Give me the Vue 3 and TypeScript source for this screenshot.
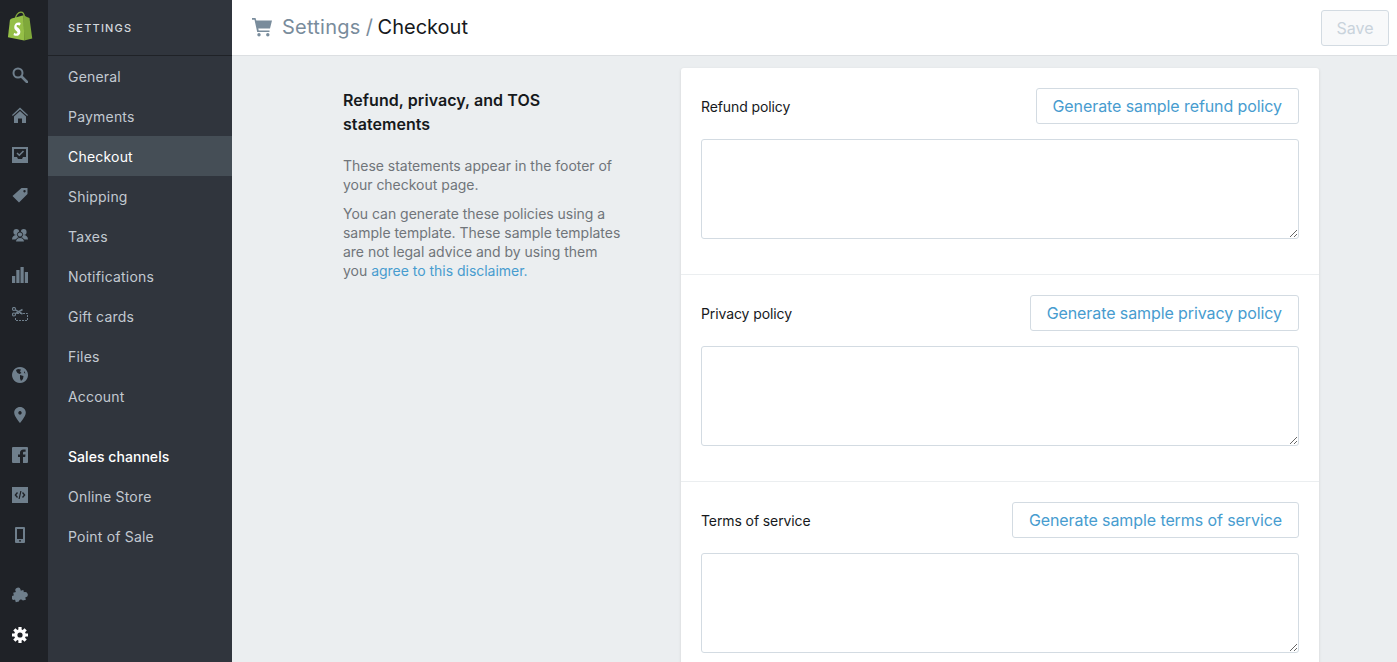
<script setup lang="ts">
const settings: string[] = ['General', 'Payments', 'Checkout', 'Shipping', 'Taxes', 'Notifications', 'Gift cards', 'Files', 'Account']
const channels: string[] = ['Online Store', 'Point of Sale']
const policies = [
  { label: 'Refund policy', action: 'Generate sample refund policy' },
  { label: 'Privacy policy', action: 'Generate sample privacy policy' },
  { label: 'Terms of service', action: 'Generate sample terms of service' },
]
</script>

<template>
  <div class="app">
    <nav class="rail">
      <div class="logo">
        <svg width="26" height="30" viewBox="0 0 28 32">
          <path d="M9 8C9.500 4.500 12 1 15 1 17.500 1 18.500 3.500 18.800 6" fill="none" stroke="#86ab3f" stroke-width="1.300" />
          <path d="M18 4.500 5 8 3.200 9.200 1 28 18.500 31.500Z" fill="#95bf47" />
          <path d="M18 4.500 18.500 31.500 27.200 29.500 24.200 7.500 21.500 6.300Z" fill="#7fa83a" />
          <path d="M14.800 12.800 13.900 15.500C13.200 15.100 12.400 14.900 11.700 14.900 10.600 14.900 10.300 15.500 10.300 16 10.300 17.500 14.400 18.200 14.400 22.100 14.400 25 12.500 26.600 10.200 26.600 8.400 26.600 7 25.700 7 25.700L7.700 23.200C8.300 23.700 9.200 24.200 10.100 24.200 10.800 24.200 11.200 23.700 11.200 23.100 11.200 21.100 7.800 21 7.800 17.100 7.800 14.400 9.800 12.300 12.300 12.300 13.700 12.300 14.800 12.800 14.800 12.800Z" fill="#fff" />
        </svg>
      </div>
      <div class="rail-group">
        <a class="rail-item"><svg viewBox="0 0 16 16"><circle cx="6" cy="6" r="4.500" fill="none" stroke="currentColor" stroke-width="2" /><path d="M9.500 9.500 15 15" stroke="currentColor" stroke-width="2.600" stroke-linecap="round" /></svg></a>
        <a class="rail-item"><svg viewBox="0 0 16 16"><path d="M8 .5 0 8l.8 1L8 2.500 15.200 9l.8-1Z" fill="currentColor" /><path d="M8 4 2 9.400V16h4v-4.500h4V16h4V9.400Z" fill="currentColor" /></svg></a>
        <a class="rail-item"><svg viewBox="0 0 16 16"><path fill-rule="evenodd" d="M0 0h16v16H0ZM2 2v8h3l1 2h4l1-2h3V2Z" fill="currentColor" /><path d="M5 6l2.300 2.300L11.500 4" fill="none" stroke="currentColor" stroke-width="1.500" /></svg></a>
        <a class="rail-item"><svg viewBox="0 0 16 16"><path fill-rule="evenodd" d="M9.500 1H15.500V7L7 15.500.5 9ZM12.500 3a1.200 1.200 0 1 0 .01 0Z" fill="currentColor" /></svg></a>
        <a class="rail-item"><svg viewBox="0 0 16 16"><g fill="currentColor"><circle cx="4.300" cy="5" r="2.900" /><circle cx="11.700" cy="5" r="2.900" /><path d="M0 12.500C0 9.500 2 8 4.300 8S8 9.500 8 12.500ZM8 12.500C8 9.500 9.500 8 11.700 8S16 9.500 16 12.500Z" /></g><g fill="currentColor" stroke="#1f2227" stroke-width="1"><circle cx="8" cy="7.500" r="2.600" /><path d="M3.500 15C3.500 12 5.500 10.500 8 10.500S12.500 12 12.500 15Z" /></g></svg></a>
        <a class="rail-item"><svg viewBox="0 0 16 16"><g fill="currentColor"><rect x="0" y="9" width="3.200" height="7" /><rect x="4.300" y="3" width="3.200" height="13" /><rect x="8.500" y="0" width="3.200" height="16" /><rect x="12.800" y="5" width="3.200" height="11" /></g></svg></a>
        <a class="rail-item"><svg viewBox="0 0 16 16"><g fill="none" stroke="currentColor"><circle cx="2" cy="2" r="1.500" stroke-width="1.200" /><circle cx="2" cy="7.500" r="1.500" stroke-width="1.200" /><path d="M3.300 2.800 10.500 7M3.300 6.700 10.500 2.500" stroke-width="1.500" /><path d="M5 6.500H15.500V13.500H3.500V10" stroke-dasharray="2 1" /></g></svg></a>
      </div>
      <div class="rail-group mid">
        <a class="rail-item"><svg viewBox="0 0 16 16"><path fill-rule="evenodd" d="M8 0a8 8 0 1 0 .01 0ZM4 3l2-1 3 .5L8 4.500 9.500 6 7.500 7 5.500 6 4.500 4.500ZM8 8l3.500 1L11 12l-2 2-1-2.500ZM12 4l1.500 2.500-1.500-.5Z" fill="currentColor" /></svg></a>
        <a class="rail-item"><svg viewBox="0 0 16 16"><path fill-rule="evenodd" d="M8 0C4.700 0 2.200 2.500 2.200 5.800 2.200 9.500 8 16 8 16s5.800-6.500 5.800-10.200C13.800 2.500 11.300 0 8 0ZM8 4.100a1.700 1.700 0 1 1-.01 0Z" fill="currentColor" /></svg></a>
        <a class="rail-item"><svg viewBox="0 0 16 16"><path fill-rule="evenodd" d="M1 0H15a1 1 0 0 1 1 1V15a1 1 0 0 1-1 1H11V10h2.200L13.500 7.500H11V6c0-.8.300-1.200 1.200-1.200H13.600V2.500H11.500C9.200 2.500 8 3.800 8 5.800V7.500H6V10H8V16H1a1 1 0 0 1-1-1V1A1 1 0 0 1 1 0Z" fill="currentColor" /></svg></a>
        <a class="rail-item"><svg viewBox="0 0 16 16"><path fill-rule="evenodd" d="M0 0H16V16H0ZM5 5 2.500 8 5 11 6 10 4.300 8 6 6ZM11 5 10 6 11.700 8 10 10 11 11 13.500 8ZM8.300 4 6.500 12H7.700L9.500 4Z" fill="currentColor" /></svg></a>
        <a class="rail-item"><svg viewBox="0 0 16 16"><path fill-rule="evenodd" d="M4 0H12a1 1 0 0 1 1 1V15a1 1 0 0 1-1 1H4a1 1 0 0 1-1-1V1A1 1 0 0 1 4 0ZM5 2V12H11V2ZM8 13a.9.9 0 1 0 .01 0Z" fill="currentColor" /></svg></a>
      </div>
      <div class="rail-group bottom">
        <a class="rail-item"><svg viewBox="0 0 16 16"><g transform="rotate(-15 8 8)" fill="currentColor"><rect x="2" y="4" width="10.500" height="10" /><circle cx="7.300" cy="3" r="2.700" /><circle cx="13" cy="9" r="2.700" /><circle cx="1.500" cy="9" r="2.300" /><circle cx="7.300" cy="14.500" r="2" fill="#1f2227" /></g></svg></a>
        <a class="rail-item active"><svg viewBox="0 0 16 16"><g stroke="currentColor" stroke-width="3.200" fill="none"><path d="M8 0V16M0 8H16M2.340 2.340 13.660 13.660M13.660 2.340 2.340 13.660" /></g><circle cx="8" cy="8" r="5.800" fill="currentColor" /><circle cx="8" cy="8" r="2.600" fill="#1f2227" /></svg></a>
      </div>
    </nav>

    <aside class="sidebar">
      <div class="sidebar-head">SETTINGS</div>
      <a v-for="item in settings" :key="item" class="side-item" :class="{ current: item === 'Checkout' }">{{ item }}</a>
      <div class="side-title">Sales channels</div>
      <a v-for="item in channels" :key="item" class="side-item">{{ item }}</a>
    </aside>

    <div class="main">
      <header class="topbar">
        <svg class="cart" width="20" height="20" viewBox="0 0 20 20">
          <path d="M0 1H3.500L4.300 3.500H20L18 11.500H6.300L6.700 13.500H17.500V15H5.200L2.500 2.800H0Z" fill="#798c9c" />
          <circle cx="7" cy="17.800" r="1.700" fill="#798c9c" />
          <circle cx="15.800" cy="17.800" r="1.700" fill="#798c9c" />
        </svg>
        <h1 class="crumbs"><span class="crumb">Settings</span><span class="sep"> / </span>Checkout</h1>
        <button class="save" type="button">Save</button>
      </header>

      <div class="content">
        <section class="intro">
          <h2>Refund, privacy, and TOS statements</h2>
          <p>These statements appear in the footer of your checkout page.</p>
          <p>You can generate these policies using a sample template. These sample templates are not legal advice and by using them you <a>agree to this disclaimer.</a></p>
        </section>
        <section class="card">
          <div v-for="p in policies" :key="p.label" class="policy">
            <div class="policy-head">
              <label>{{ p.label }}</label>
              <button type="button" class="gen">{{ p.action }}</button>
            </div>
            <textarea></textarea>
          </div>
        </section>
      </div>
    </div>
  </div>
</template>

<style>
html, body { margin: 0; height: 100%; overflow: hidden; }
</style>

<style scoped>
.app {
  display: flex;
  width: 1397px;
  height: 662px;
  overflow: hidden;
  font-family: Inter, "Liberation Sans", sans-serif;
  font-size: 14px;
  background: #ebeef0;
}
.rail {
  width: 48px;
  flex: none;
  box-sizing: border-box;
  padding-right: 8px;
  background: #1f2227;
  display: flex;
  flex-direction: column;
  color: #6f7f8c;
}
.logo {
  height: 55px;
  display: flex;
  align-items: center;
  justify-content: center;
  padding-bottom: 3px;
  box-sizing: border-box;
}
.rail-group { display: flex; flex-direction: column; }
.mid { margin-top: 20px; }
.bottom { margin-top: auto; margin-bottom: 7px; }
.rail-item {
  height: 40px;
  display: flex;
  align-items: center;
  justify-content: center;
}
.rail-item svg { width: 16px; height: 16px; display: block; }
.rail-item.active { color: #fff; }
.sidebar {
  width: 184px;
  flex: none;
  background: #30353d;
  color: #c2c9d1;
  display: flex;
  flex-direction: column;
}
.sidebar-head {
  height: 56px;
  box-sizing: border-box;
  border-bottom: 1px solid #1f2227;
  padding-left: 20px;
  display: flex;
  align-items: center;
  font-size: 11px;
  font-weight: 500;
  letter-spacing: 1.200px;
  color: #d3d8dd;
}
.side-item, .side-title {
  height: 40px;
  flex: none;
  padding-left: 20px;
  display: flex;
  align-items: center;
  letter-spacing: 0.200px;
}
.side-item.current { background: #454e56; color: #fff; }
.side-title { margin-top: 20px; color: #fff; font-weight: 500; letter-spacing: 0.050px; }
.main {
  flex: 1;
  min-width: 0;
  display: flex;
  flex-direction: column;
}
.topbar {
  height: 56px;
  flex: none;
  box-sizing: border-box;
  background: #fff;
  border-bottom: 1px solid #dcdfe2;
  display: flex;
  align-items: center;
  padding: 0 8px 0 20px;
}
.cart { flex: none; margin-right: 10px; margin-top: -2px; }
.crumbs {
  margin: -2px 0 0;
  font-size: 20px;
  font-weight: 400;
  color: #16191c;
}
.crumb { color: #798c9c; letter-spacing: 0.250px; }
.sep { color: #798c9c; letter-spacing: -0.500px; }
.save {
  margin-left: auto;
  width: 68px;
  height: 36px;
  box-sizing: border-box;
  border: 1px solid #d3dbe2;
  border-radius: 3px;
  background: #f8f9fa;
  color: #c9d3dc;
  font: 400 16px Inter, sans-serif;
}
.content {
  flex: 1;
  min-height: 0;
  display: flex;
  align-items: flex-start;
  padding: 12px 78px 0 111px;
}
.intro {
  width: 338px;
  flex: none;
  padding: 20px 58px 0 0;
  box-sizing: border-box;
  color: #70757a;
  line-height: 19px;
}
.intro h2 {
  margin: 0 0 20px;
  font-size: 16px;
  font-weight: 600;
  line-height: 24px;
  letter-spacing: 0.060px;
  color: #16191c;
}
.intro p { margin: 0 0 10px; letter-spacing: -0.020px; }
.intro a { color: #479ccf; }
.card {
  flex: 1;
  background: #fff;
  border-radius: 3px;
  box-shadow: 0 1px 3px rgba(63, 63, 68, 0.15);
}
.policy {
  padding: 20px 20px 35px;
  border-bottom: 1px solid #ebeef0;
  display: flex;
  flex-direction: column;
}
.policy-head {
  display: flex;
  justify-content: space-between;
  align-items: center;
  margin-bottom: 15px;
}
.policy-head label { color: #16191c; letter-spacing: -0.100px; }
.gen {
  height: 36px;
  padding: 0 16px;
  box-sizing: border-box;
  background: #fff;
  border: 1px solid #d3dbe2;
  border-radius: 3px;
  color: #479ccf;
  font: 400 16px Inter, sans-serif;
  letter-spacing: -0.090px;
}
textarea {
  display: block;
  height: 100px;
  box-sizing: border-box;
  border: 1px solid #d3dbe2;
  border-radius: 3px;
  background: #fff;
  outline: none;
  margin: 0;
}
</style>
